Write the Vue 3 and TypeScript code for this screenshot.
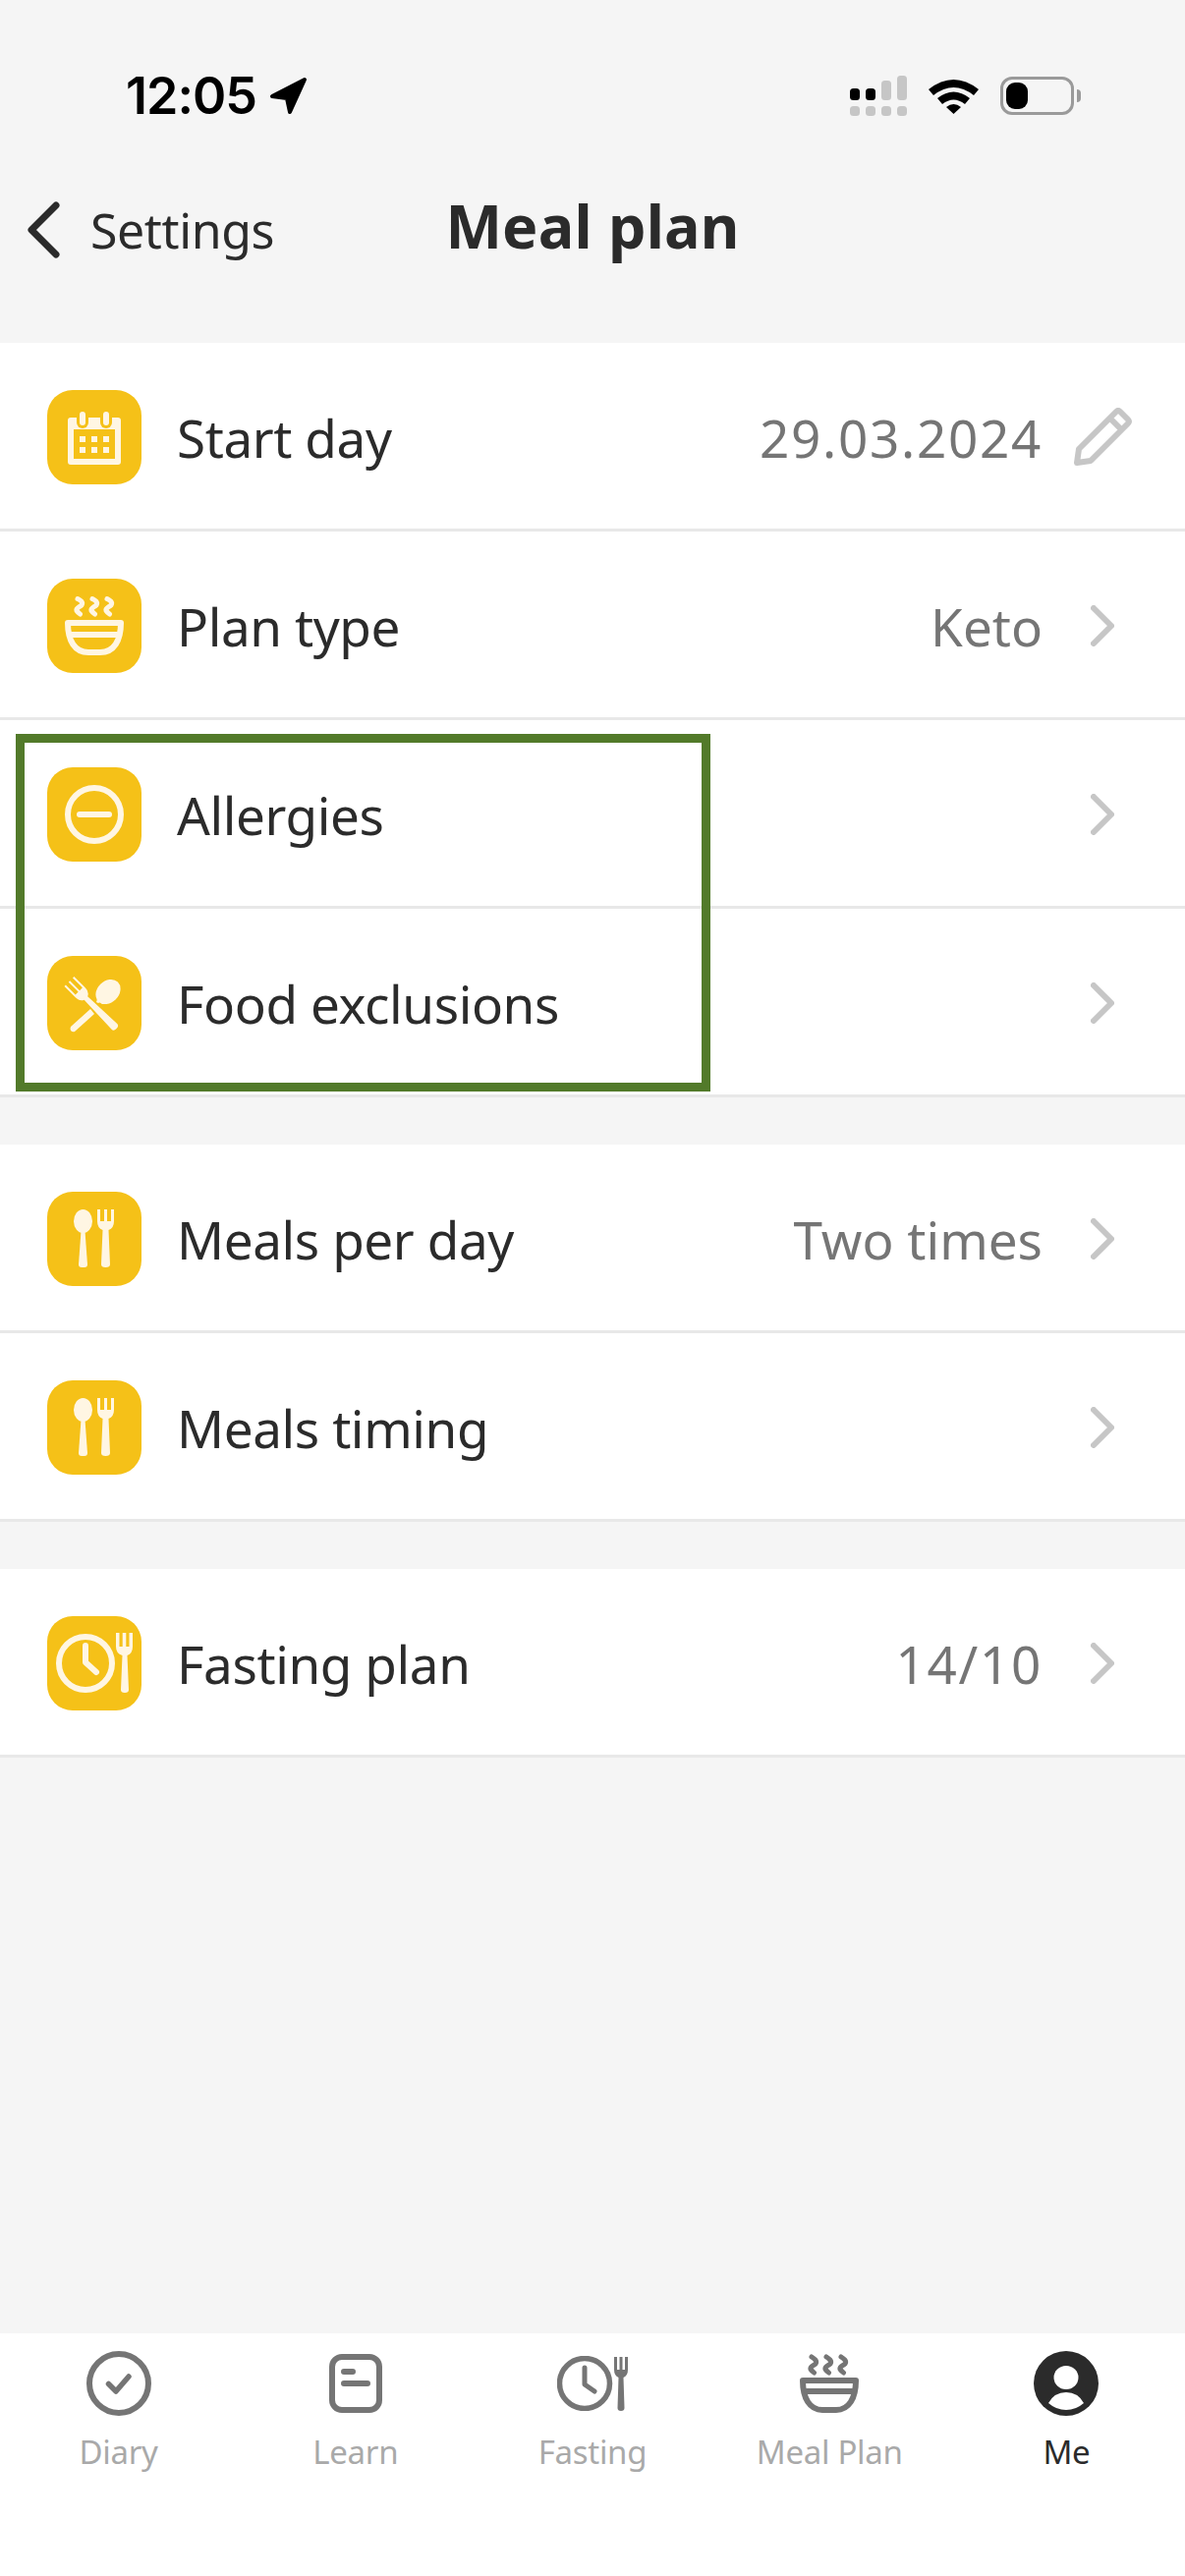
<script setup lang="ts">
type RowIcon = "calendar" | "bowl" | "minus" | "cross" | "cutlery" | "fasting";

interface Row {
	label: string;
	value?: string;
	icon: RowIcon;
	edit?: boolean;
}

const groups: Row[][] = [
	[
		{ label: "Start day", value: "29.03.2024", icon: "calendar", edit: true },
		{ label: "Plan type", value: "Keto", icon: "bowl" },
		{ label: "Allergies", icon: "minus" },
		{ label: "Food exclusions", icon: "cross" },
	],
	[
		{ label: "Meals per day", value: "Two times", icon: "cutlery" },
		{ label: "Meals timing", icon: "cutlery" },
	],
	[{ label: "Fasting plan", value: "14/10", icon: "fasting" }],
];

const tabs = ["Diary", "Learn", "Fasting", "Meal Plan", "Me"];

function isNumeric(value: string): boolean {
	return /\d/.test(value);
}
</script>

<template>
	<div class="screen">
		<div class="status-bar">
			<div class="clock">
				<span>12:05</span>
				<svg class="location" viewBox="0 0 40 40">
					<path d="M36 3 L3 20 L18 22 L21 36 Z" fill="#000" stroke="#000" stroke-width="4" stroke-linejoin="round" />
				</svg>
			</div>
			<div class="status-icons">
				<svg class="signal" width="58" height="41" viewBox="0 0 58 41">
					<rect x="0" y="13" width="10" height="12" rx="3.5" fill="#000" />
					<rect x="16" y="13" width="10" height="12" rx="3.5" fill="#000" />
					<rect x="32" y="5" width="10" height="20" rx="3.5" fill="#c6c6c6" />
					<rect x="48" y="0" width="10" height="25" rx="3.5" fill="#c6c6c6" />
					<rect x="0" y="31" width="10" height="10" rx="3.5" fill="#c6c6c6" />
					<rect x="16" y="31" width="10" height="10" rx="3.5" fill="#c6c6c6" />
					<rect x="32" y="31" width="10" height="10" rx="3.5" fill="#c6c6c6" />
					<rect x="48" y="31" width="10" height="10" rx="3.5" fill="#c6c6c6" />
				</svg>
				<svg class="wifi" width="51" height="37" viewBox="0 0 51 37">
					<path d="M0 12 Q25.5 -8 51 12 L46 18 Q25.5 2 5 18 Z" fill="#000" />
					<path d="M9 21 Q25.5 8 42 21 L37 27 Q25.5 18 14 27 Z" fill="#000" />
					<path d="M18 30 Q25.5 24 33 30 L25.5 37 Z" fill="#000" />
				</svg>
				<div class="battery">
					<div class="battery-level"></div>
					<div class="battery-nub"></div>
				</div>
			</div>
		</div>

		<header class="nav-bar">
			<div class="back">
				<svg width="36" height="58" viewBox="0 0 36 58">
					<path d="M29 4 L4 29 L29 54" fill="none" stroke="#2b2b2b" stroke-width="7" stroke-linecap="round" stroke-linejoin="round" />
				</svg>
				<span>Settings</span>
			</div>
			<h1>Meal plan</h1>
		</header>

		<main class="groups">
			<section v-for="(group, g) in groups" :key="g" class="group">
				<div v-for="row in group" :key="row.label" class="row">
					<div class="tile">
						<svg width="96" height="96" viewBox="0 0 96 96">
							<g v-if="row.icon === 'calendar'" fill="#fff6e3">
								<path fill-rule="evenodd" d="M24 28 H72 Q75 28 75 31 V73 Q75 76 72 76 H24 Q21 76 21 73 V31 Q21 28 24 28 Z M27 40 V70 H69 V40 Z" />
								<rect x="30" y="20" width="12" height="19" rx="6" fill="#f5c118" />
								<rect x="54" y="20" width="12" height="19" rx="6" fill="#f5c118" />
								<rect x="33" y="22" width="6" height="14" rx="3" />
								<rect x="57" y="22" width="6" height="14" rx="3" />
								<rect x="33" y="47" width="6" height="6" />
								<rect x="45" y="47" width="6" height="6" />
								<rect x="57" y="47" width="6" height="6" />
								<rect x="33" y="58" width="6" height="6" />
								<rect x="45" y="58" width="6" height="6" />
								<rect x="57" y="58" width="6" height="6" />
							</g>
							<g v-else-if="row.icon === 'bowl'" fill="none" stroke="#fff6e3" stroke-width="6" stroke-linecap="round" stroke-linejoin="round">
								<path d="M21 45 H75 C75 63 68 75 54 75 H42 C28 75 21 63 21 45 Z" />
								<path d="M25 57 H71" />
								<g stroke-width="5">
									<path d="M31 20.5 C34 22 37 24 35 27 C33 29 29 30 30 32.5 C31 34 32 35 33.5 36" />
									<path d="M46 20.5 C49 22 52 24 50 27 C48 29 44 30 45 32.5 C46 34 47 35 48.5 36" />
									<path d="M61 20.5 C64 22 67 24 65 27 C63 29 59 30 60 32.5 C61 34 62 35 63.5 36" />
								</g>
							</g>
							<g v-else-if="row.icon === 'minus'" fill="none" stroke="#fff6e3" stroke-width="6" stroke-linecap="round">
								<circle cx="48" cy="48" r="27" />
								<path d="M33 48 H63" />
							</g>
							<g v-else-if="row.icon === 'cross'" fill="#fff6e3">
								<path transform="translate(46.5 50) rotate(-45)" d="M-7 -34 H-5 V-20 H-1 V-34 H1 V-20 H5 V-34 H7 V-18 Q7 -12 2.5 -10 L4 31 Q4 34 0 34 Q-4 34 -4 31 L-2.5 -10 Q-7 -12 -7 -18 Z" />
								<ellipse cx="62" cy="36.5" rx="14" ry="11" transform="rotate(-45 62 36.5)" />
								<path d="M44 54 L48 59 L28 77 Q26 78 24 76 Q23 74 24 72 Z" />
								<path d="M51 44 L54 47 L52 48 L50 47 Z" />
							</g>
							<g v-else-if="row.icon === 'cutlery'" fill="#fff6e3">
								<ellipse cx="36.5" cy="30" rx="9.5" ry="12" />
								<path d="M34.5 40 H38.5 L41 74 Q41 77 38 77 H35 Q32 77 32 74 Z" />
								<path d="M51 18 H54 V30 H58 V18 H61 V30 H65 V18 H68 V30 Q68 37 62.5 39 L64 74 Q64 77 59.5 77 Q55 77 55 74 L56.5 39 Q51 37 51 30 Z" />
							</g>
							<g v-else>
								<g fill="none" stroke="#fff6e3" stroke-linecap="round" stroke-linejoin="round" stroke-width="6">
									<circle cx="39" cy="48" r="27" />
									<path d="M39 30 V47 L50 57" />
								</g>
								<path fill="#fff6e3" d="M70 17 H73.5 V31 H76.7 V17 H80.3 V31 H83.5 V17 H87 V31 Q87 38 81.5 40 L83 75 Q83 78 79 78 Q75 78 75 75 L76.5 40 Q70 38 70 31 Z" />
							</g>
						</svg>
					</div>
					<span class="label">{{ row.label }}</span>
					<span v-if="row.value" class="value" :class="{ numeric: isNumeric(row.value) }">{{ row.value }}</span>
					<svg v-if="row.edit" class="pencil" width="60" height="60" viewBox="0 0 60 60">
						<path d="M4 56 L6 42 L44 4 Q46 2 48 4 L56 12 Q58 14 56 16 L18 54 Z M38 11 L49 22" fill="none" stroke="#c6c6c6" stroke-width="6" stroke-linejoin="round" />
					</svg>
					<svg v-else class="chevron" width="24" height="42" viewBox="0 0 24 42">
						<path d="M3 3 L21 21 L3 39" fill="none" stroke="#c6c6c6" stroke-width="6" stroke-linecap="round" stroke-linejoin="round" />
					</svg>
				</div>
			</section>
		</main>

		<div class="highlight"></div>

		<nav class="tab-bar">
			<div v-for="(tab, i) in tabs" :key="tab" class="tab" :class="{ active: i === 4 }">
				<div class="tab-icon">
					<svg v-if="i === 0" width="66" height="66" viewBox="0 0 66 66">
						<circle cx="33" cy="33" r="30" fill="none" stroke="#757575" stroke-width="6" />
						<path d="M22.5 33.5 L30 41 L43 26" fill="none" stroke="#757575" stroke-width="5.5" stroke-linecap="round" stroke-linejoin="round" />
					</svg>
					<svg v-else-if="i === 1" width="54" height="60" viewBox="0 0 54 60">
						<rect x="3" y="3" width="48" height="54" rx="10" fill="none" stroke="#757575" stroke-width="6" />
						<path d="M15 18 H24 M15 30 H39" fill="none" stroke="#757575" stroke-width="6" stroke-linecap="round" />
					</svg>
					<svg v-else-if="i === 2" width="72" height="56" viewBox="0 0 72 56">
						<g fill="none" stroke="#757575" stroke-linecap="round" stroke-linejoin="round">
							<circle cx="28" cy="28" r="25.5" stroke-width="5.5" />
							<path d="M28 12 V29 L38 36" stroke-width="5" />
						</g>
						<path fill="#757575" d="M58 1 H61 V14 H63.5 V1 H66.5 V14 H69 V1 H72 V14 Q72 20 67.5 22 L68.5 53 Q68.5 56 65 56 Q61.5 56 61.5 53 L62.5 22 Q58 20 58 14 Z" />
					</svg>
					<svg v-else-if="i === 3" width="60" height="60" viewBox="0 0 60 60">
						<g fill="none" stroke="#757575" stroke-width="6" stroke-linecap="round" stroke-linejoin="round">
							<path d="M3 27 H57 C57 45 50 57 37 57 H23 C10 57 3 45 3 27 Z" />
							<path d="M7 38 H53" />
							<g stroke-width="5">
								<path d="M12 3 C15 5 18 7 16 10 C14 12 10 13 11 15.5 C12 17 13 18 14.5 19" />
								<path d="M27 3 C30 5 33 7 31 10 C29 12 25 13 26 15.5 C27 17 28 18 29.5 19" />
								<path d="M42 3 C45 5 48 7 46 10 C44 12 40 13 41 15.5 C42 17 43 18 44.5 19" />
							</g>
						</g>
					</svg>
					<svg v-else width="66" height="66" viewBox="0 0 66 66">
						<circle cx="33" cy="33" r="33" fill="#2b2b2b" />
						<ellipse cx="33" cy="27" rx="12.5" ry="12" fill="#fff" />
						<path d="M15 53 Q21 42 33 42 Q45 42 51 53 Q43 60 33 60 Q23 60 15 53 Z" fill="#fff" />
					</svg>
				</div>
				<span>{{ tab }}</span>
			</div>
		</nav>
	</div>
</template>

<style scoped>
.screen {
	position: relative;
	display: flex;
	flex-direction: column;
	width: 1206px;
	height: 2622px;
	overflow: hidden;
	background: #f5f5f5;
	color: #2b2b2b;
	font-family: "Noto Sans", sans-serif;
}

.status-bar {
	display: flex;
	justify-content: space-between;
	align-items: flex-start;
	height: 120px;
	padding: 77px 113px 0 128px;
	box-sizing: border-box;
}

.clock {
	display: flex;
	align-items: center;
	gap: 13px;
	height: 41px;
	color: #000;
	font-family: "Inter", sans-serif;
	font-size: 52px;
	font-weight: 600;
	letter-spacing: -1px;
}

.location {
	width: 40px;
	height: 40px;
}

.status-icons {
	display: flex;
	align-items: center;
	gap: 22px;
}

.battery {
	position: relative;
	width: 75px;
	height: 39px;
	box-sizing: border-box;
	border: 3px solid #9a9a9a;
	border-radius: 12px;
	padding: 3px;
}

.battery-level {
	width: 22px;
	height: 100%;
	border-radius: 9px;
	background: #000;
}

.battery-nub {
	position: absolute;
	top: 10px;
	right: -10px;
	width: 4px;
	height: 13px;
	border-radius: 0 4px 4px 0;
	background: #9a9a9a;
}

.nav-bar {
	position: relative;
	height: 229px;
	box-sizing: border-box;
}

.back {
	position: absolute;
	left: 28px;
	top: 85px;
	display: flex;
	align-items: center;
	gap: 28px;
	font-size: 50px;
	line-height: 58px;
}

.back span {
	letter-spacing: -0.4px;
}

.nav-bar h1 {
	margin: 0;
	padding-top: 72px;
	text-align: center;
	font-size: 61px;
	line-height: 76px;
	font-weight: 700;
	letter-spacing: 0.2px;
}

.groups {
	display: flex;
	flex-direction: column;
	gap: 48px;
}

.group {
	background: #fff;
}

.row {
	display: flex;
	align-items: center;
	height: 192px;
	box-sizing: border-box;
	padding: 3px 54px 0 48px;
	border-bottom: 3px solid #e8e8e8;
	font-size: 53px;
}

.tile {
	flex: none;
	width: 96px;
	height: 96px;
	margin-right: 36px;
	border-radius: 26px;
	background: #f5c118;
}

.tile svg {
	display: block;
}

.label {
	flex: 1;
	letter-spacing: -0.4px;
}

.value {
	color: #757575;
	margin-right: 49px;
}

.value.numeric {
	letter-spacing: 1.7px;
}

.chevron {
	flex: none;
	margin-right: 18px;
}

.pencil {
	flex: none;
}

.row:has(.pencil) .value {
	margin-right: 31px;
}

.highlight {
	position: absolute;
	left: 16px;
	top: 747px;
	width: 707px;
	height: 364px;
	box-sizing: border-box;
	border: 9px solid #527a2a;
	pointer-events: none;
}

.tab-bar {
	position: absolute;
	left: 0;
	right: 0;
	bottom: 0;
	display: grid;
	grid-template-columns: repeat(5, 1fr);
	height: 247px;
	padding-top: 18px;
	box-sizing: border-box;
	background: #fff;
}

.tab {
	display: flex;
	flex-direction: column;
	align-items: center;
	color: #a9a9a9;
	font-size: 33px;
	line-height: 40px;
	letter-spacing: -0.3px;
}

.tab.active {
	color: #2b2b2b;
}

.tab-icon {
	display: flex;
	align-items: center;
	justify-content: center;
	height: 66px;
	margin-bottom: 17px;
}

.tab-icon svg {
	display: block;
}
</style>

<style>
body {
	background: #f5f5f5;
}
</style>
